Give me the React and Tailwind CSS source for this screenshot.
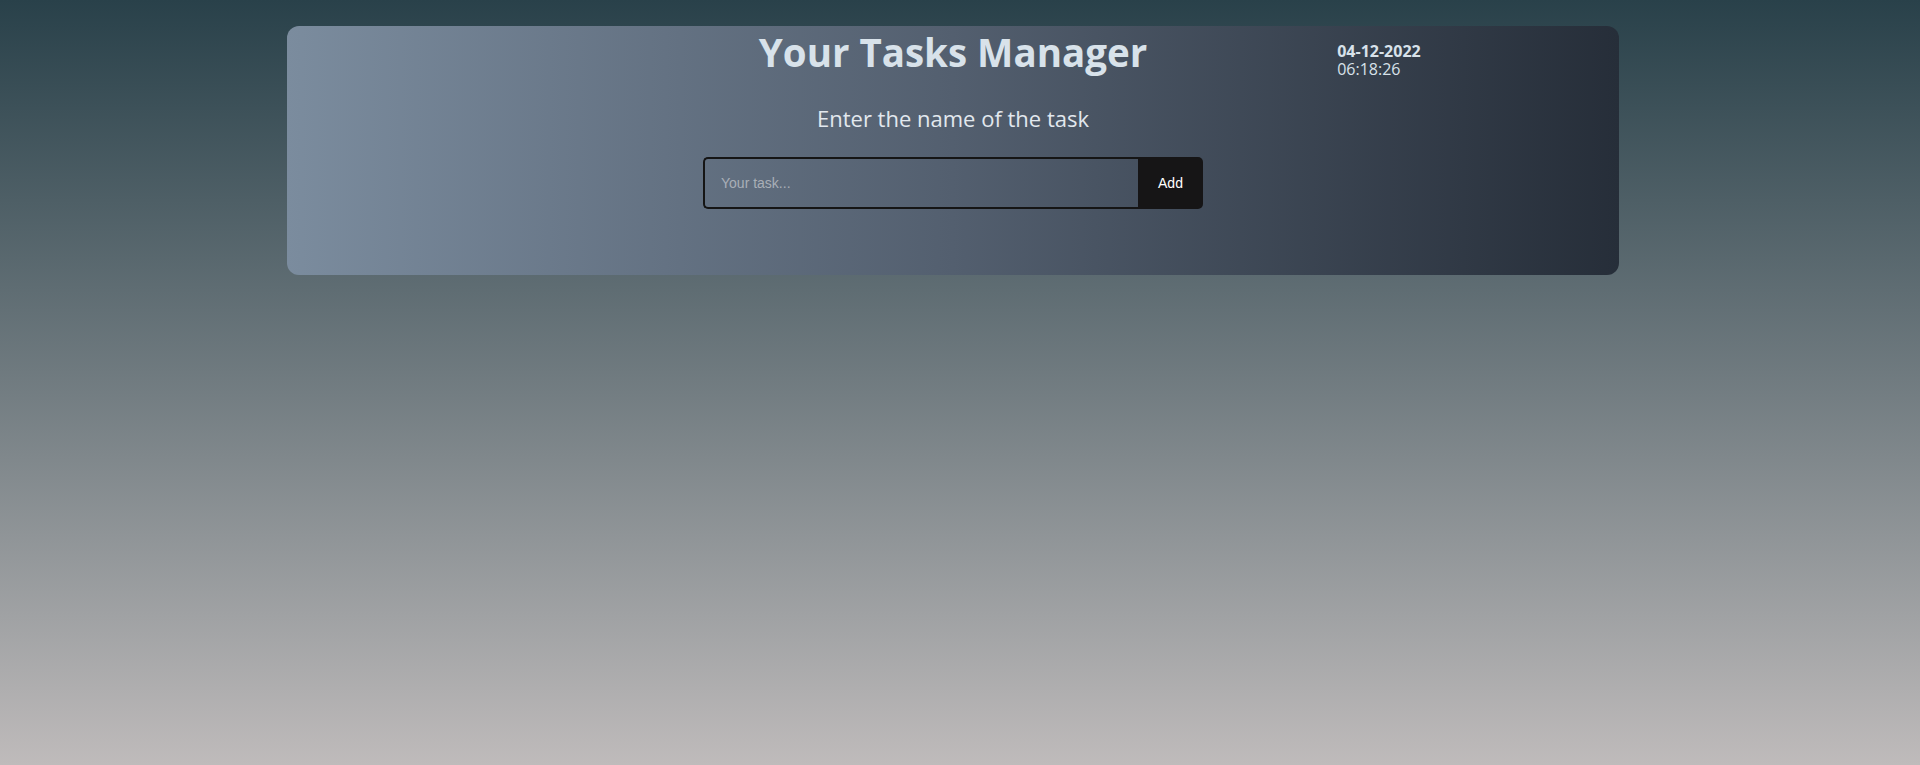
const App = () => {
    return (
        <div className="min-h-screen w-full bg-linear-to-b from-[#29414a] to-[#bfbbbb] pt-[26px]">
            <div className="ml-[287px] w-[1332px] h-[249px] rounded-xl bg-linear-to-r from-[#7b8c9e] via-[#535f6f] to-[#262e39] font-['Open_Sans',sans-serif]">
                <div className="grid grid-cols-[1fr_auto_1fr] items-start pt-[2px]">
                    <div></div>
                    <h1 className="text-[38.5px] leading-[48px] font-bold text-[#d8e2ea]">
                        Your Tasks Manager
                    </h1>
                    <div className="pl-[190px] mt-[14px] text-[16px] leading-[18px] text-[#d8e2ea]">
                        <div className="font-bold">04-12-2022</div>
                        <div>06:18:26</div>
                    </div>
                </div>

                <p className="mt-[25px] text-center text-[22px] leading-[30px] text-[#e2e8ee]">
                    Enter the name of the task
                </p>

                <div className="mt-[24px] flex justify-center">
                    <div className="flex w-[500px] h-[52px]">
                        <input
                            type="text"
                            placeholder="Your task..."
                            className="w-[435px] h-full bg-transparent border-2 border-r-0 border-[#151515] rounded-l-[5px] px-4 text-[14px] text-white placeholder:text-[#a9afb7] outline-none font-['Liberation_Sans',Arial,sans-serif]"
                        />
                        <button className="w-[65px] h-full bg-[#161516] text-white text-[14px] rounded-r-[5px] font-['Liberation_Sans',Arial,sans-serif]">
                            Add
                        </button>
                    </div>
                </div>
            </div>
        </div>
    );
};

export default App;
